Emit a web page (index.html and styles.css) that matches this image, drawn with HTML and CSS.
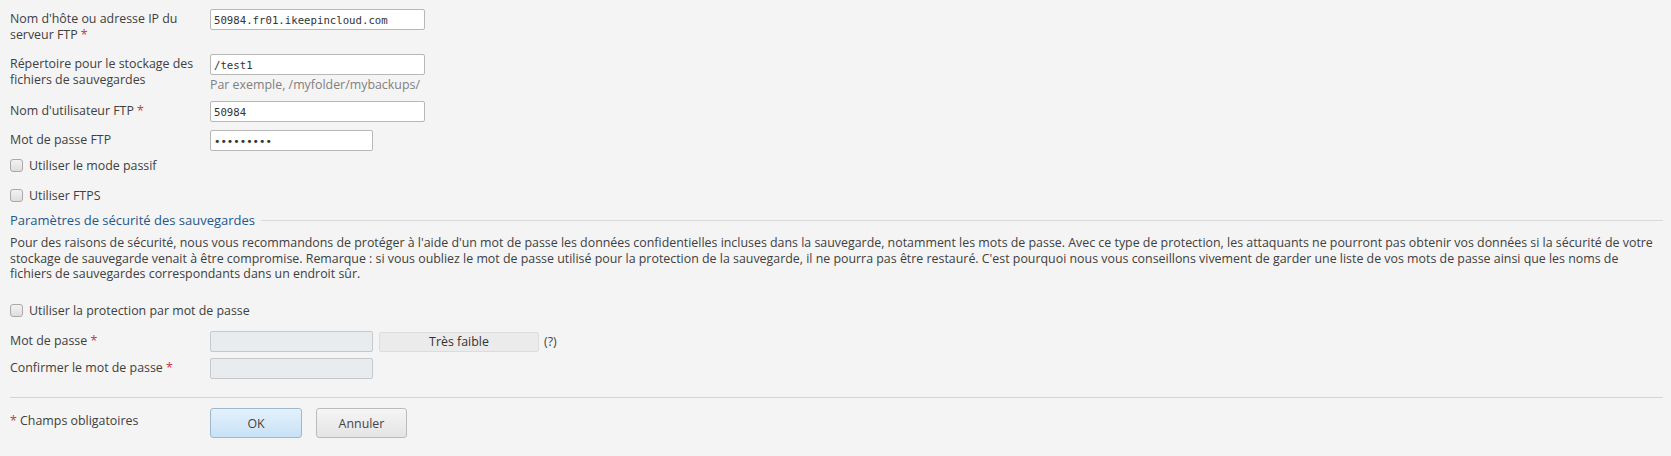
FILE: index.html
```html
<!DOCTYPE html>
<html lang="fr">
<head>
<meta charset="utf-8">
<title>FTP</title>
<link rel="stylesheet" href="styles.css">
</head>
<body>
<div class="page">
  <div class="form-row">
    <div class="label">Nom d'hôte ou adresse IP du serveur FTP <span class="req">*</span></div>
    <div class="field"><input class="input input-long" type="text" value="50984.fr01.ikeepincloud.com"></div>
  </div>
  <div class="form-row">
    <div class="label">Répertoire pour le stockage des fichiers de sauvegardes</div>
    <div class="field">
      <input class="input input-long" type="text" value="/test1">
      <div class="hint">Par exemple, /myfolder/mybackups/</div>
    </div>
  </div>
  <div class="form-row">
    <div class="label">Nom d'utilisateur FTP <span class="req">*</span></div>
    <div class="field"><input class="input input-long" type="text" value="50984"></div>
  </div>
  <div class="form-row">
    <div class="label">Mot de passe FTP</div>
    <div class="field"><input class="input input-short" type="password" value="123456789"></div>
  </div>
  <label class="check-row check-first"><input class="cb" type="checkbox"><span>Utiliser le mode passif</span></label>
  <label class="check-row"><input class="cb" type="checkbox"><span>Utiliser FTPS</span></label>

  <div class="section-title"><span class="section-text">Paramètres de sécurité des sauvegardes</span><span class="section-rule"></span></div>
  <p class="desc">Pour des raisons de sécurité, nous vous recommandons de protéger à l'aide d'un mot de passe les données confidentielles incluses dans la sauvegarde, notamment les mots de passe. Avec ce type de protection, les attaquants ne pourront pas obtenir vos données si la sécurité de votre stockage de sauvegarde venait à être compromise. Remarque : si vous oubliez le mot de passe utilisé pour la protection de la sauvegarde, il ne pourra pas être restauré. C'est pourquoi nous vous conseillons vivement de garder une liste de vos mots de passe ainsi que les noms de fichiers de sauvegardes correspondants dans un endroit sûr.</p>

  <label class="check-row check-protect"><input class="cb" type="checkbox"><span>Utiliser la protection par mot de passe</span></label>

  <div class="form-row row-pass">
    <div class="label">Mot de passe <span class="req">*</span></div>
    <div class="field field-inline">
      <input class="input input-short" type="password" disabled>
      <div class="strength">Très faible</div>
      <span class="help">(?)</span>
    </div>
  </div>
  <div class="form-row row-confirm">
    <div class="label">Confirmer le mot de passe <span class="req">*</span></div>
    <div class="field"><input class="input input-short" type="password" disabled></div>
  </div>

  <div class="footer">
    <div class="label"><span class="req">*</span> Champs obligatoires</div>
    <div class="buttons">
      <button class="btn btn-primary" type="button">OK</button>
      <button class="btn" type="button">Annuler</button>
    </div>
  </div>
</div>
</body>
</html>
```

FILE: styles.css
```css
html, body {
  margin: 0;
  padding: 0;
  background: #f4f4f4;
}
body {
  font-family: "Open Sans", "Noto Sans", sans-serif;
  font-size: 12.4px;
  color: #404040;
}
.page {
  padding: 9px 8px 0 10px;
}
.form-row {
  display: flex;
  align-items: flex-start;
  margin-bottom: 8px;
}
.label {
  width: 190px;
  padding: 2px 10px 3px 0;
  line-height: 16px;
  flex: none;
}
.req {
  color: #c4383a;
}
.field {
  display: flex;
  flex-direction: column;
}
.field-inline {
  flex-direction: row;
  align-items: center;
}
.input {
  box-sizing: border-box;
  height: 21px;
  margin: 0;
  padding: 1px 3px 0;
  border: 1px solid #b8b8b8;
  border-radius: 2px;
  background: #fff;
  font-family: "DejaVu Sans Mono", monospace;
  font-size: 10.7px;
  color: #333;
  outline: none;
}
.input:disabled {
  background: #e8ecef;
  border-color: #c6c9cc;
}
.input-long {
  width: 215px;
}
.input-short {
  width: 163px;
}
.hint {
  margin-top: 2px;
  line-height: 16px;
  color: #808080;
}
.check-row {
  display: flex;
  align-items: center;
  height: 16px;
  margin-bottom: 14px;
}
.check-first {
  margin-top: -2px;
}
.cb {
  appearance: none;
  -webkit-appearance: none;
  box-sizing: border-box;
  width: 13px;
  height: 13px;
  margin: 0 6px 0 0;
  border: 1px solid #a9a9a9;
  border-radius: 3px;
  background: linear-gradient(#f2f2f2, #dedede);
  flex: none;
}
.section-title {
  display: flex;
  align-items: center;
  margin-top: -5px;
  height: 16px;
}
.section-text {
  color: #22578c;
  font-size: 13px;
  white-space: nowrap;
}
.section-rule {
  flex: 1;
  height: 1px;
  margin-left: 6px;
  background: #d8d8d8;
}
.desc {
  margin: 7px 0 0;
  line-height: 15.7px;
}
.check-protect {
  margin-top: 20px;
  margin-bottom: 13px;
}
.row-pass {
  margin-bottom: 6px;
}
.strength {
  box-sizing: border-box;
  width: 160px;
  height: 20px;
  margin-left: 6px;
  border: 1px solid #dcdcdc;
  border-radius: 2px;
  background: #ebebeb;
  text-align: center;
  line-height: 18px;
  color: #333;
}
.help {
  margin-left: 5px;
  color: #444;
}
.footer {
  display: flex;
  align-items: flex-start;
  margin-top: 18px;
  padding-top: 10px;
  border-top: 1px solid #d4d4d4;
}
.footer .label {
  padding-top: 5px;
}
.buttons {
  display: flex;
  gap: 14px;
}
.btn {
  box-sizing: border-box;
  width: 91px;
  height: 30px;
  margin: 0;
  border: 1px solid #b9bcbf;
  border-radius: 3px;
  background: linear-gradient(#f5f5f5, #e4e4e4);
  font-family: "Open Sans", "Noto Sans", sans-serif;
  font-size: 12.4px;
  color: #444;
}
.btn-primary {
  width: 92px;
  border-color: #9fb8cc;
  background: linear-gradient(#e4f1fc, #c8e1f6);
}
```
